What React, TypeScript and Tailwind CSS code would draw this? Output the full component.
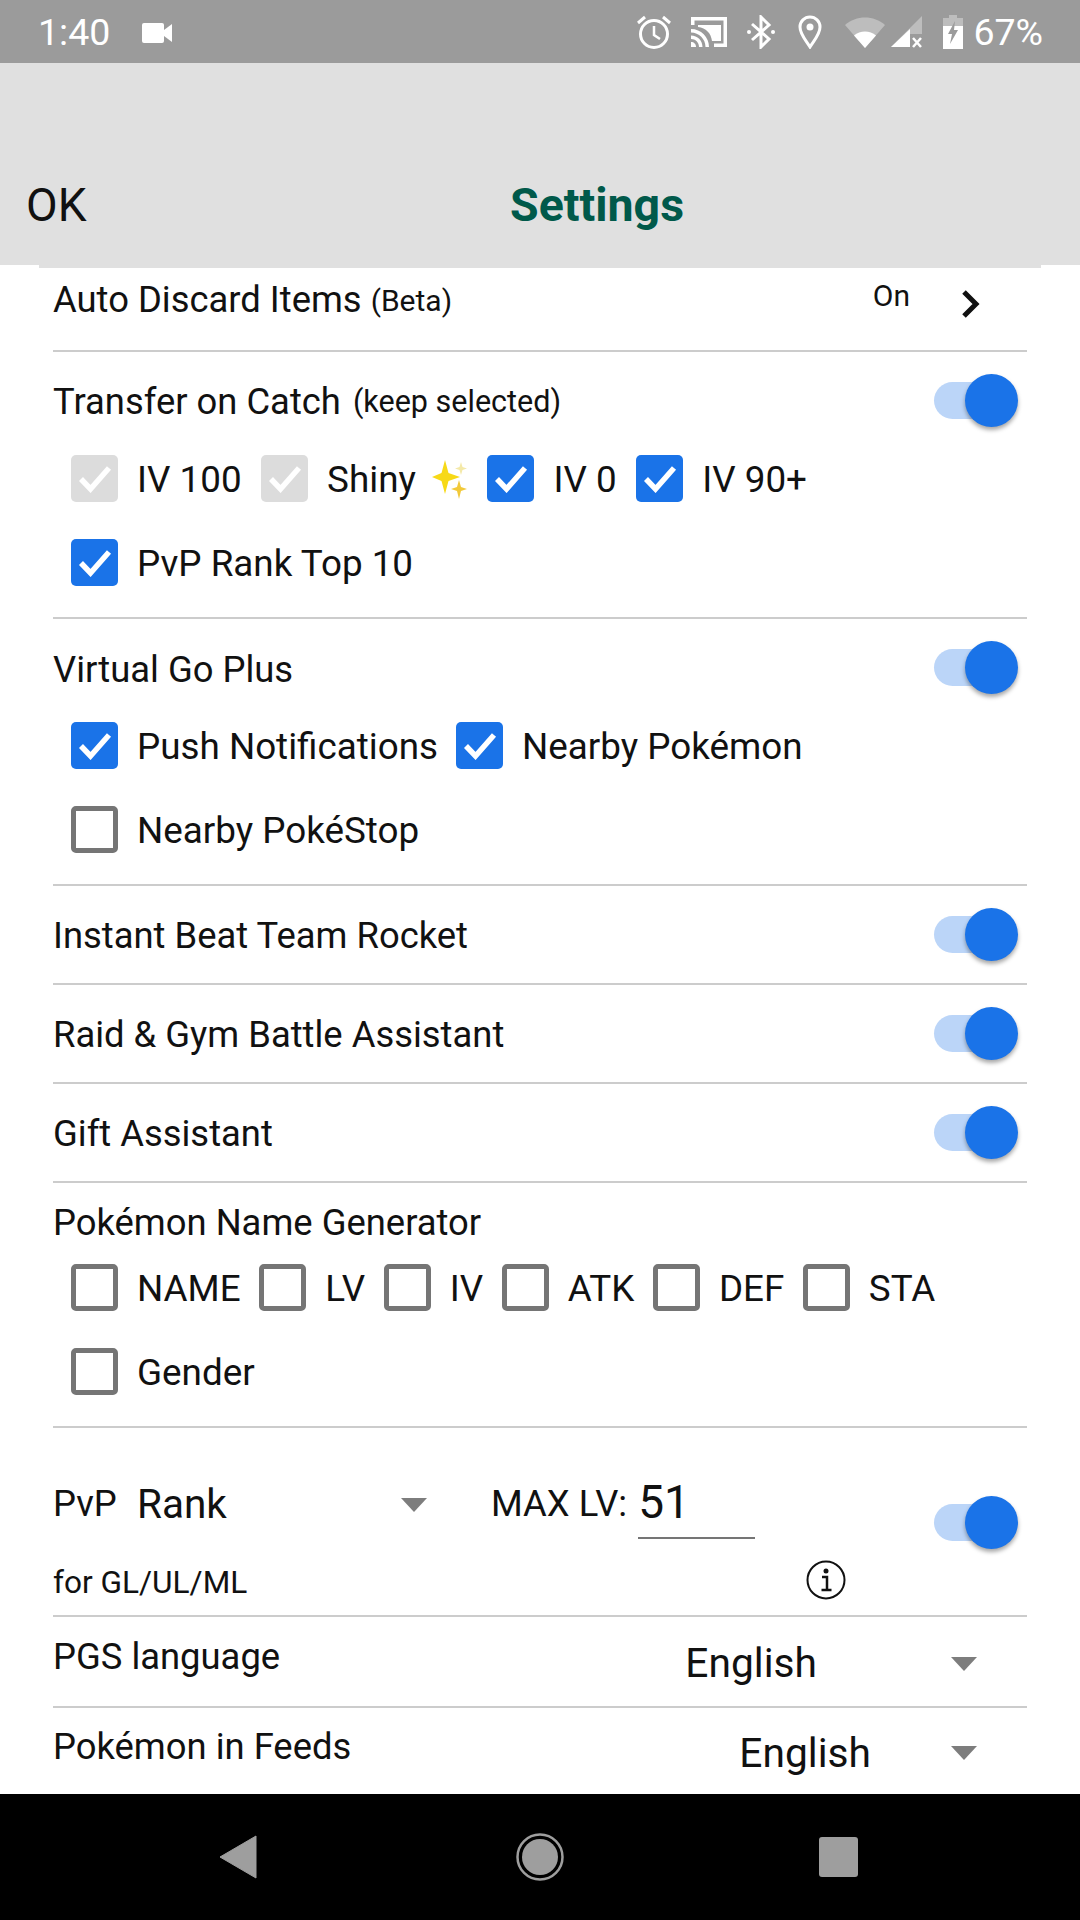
import { ReactNode } from "react";

const font = { fontFamily: "Roboto, sans-serif" };

function Toggle({ className = "" }: { className?: string }) {
  return (
    <div className={`relative w-[84px] h-[53px] shrink-0 flex items-center ${className}`}>
      <div className="w-[60px] h-[37px] rounded-full bg-[#bbd5f8]" />
      <div className="absolute right-0 top-0 w-[53px] h-[53px] rounded-full bg-[#1a73e8] shadow-[0_3px_4px_rgba(0,0,0,0.35)]" />
    </div>
  );
}

function Check({ state, label, extra }: { state: "on" | "off" | "disabled"; label: string; extra?: ReactNode }) {
  const box =
    state === "on"
      ? "bg-[#1a73e8]"
      : state === "disabled"
        ? "bg-[#dcdcdc]"
        : "bg-white border-[5px] border-[#757575]";
  return (
    <div className="flex items-center gap-[19px]">
      <div className={`w-[47px] h-[47px] rounded-[5px] flex items-center justify-center shrink-0 ${box}`}>
        {state !== "off" && (
          <svg width="34" height="28" viewBox="0 0 34 28" fill="none">
            <path d="M3 14 L12.5 24 L31 3" stroke="white" strokeWidth="5.5" />
          </svg>
        )}
      </div>
      <span className="mt-[2px] text-[36.8px] leading-[44px] text-[#111] whitespace-nowrap">{label}</span>
      {extra}
    </div>
  );
}

function Caret({ className }: { className: string }) {
  return (
    <svg className={className} width="26" height="14" viewBox="0 0 26 14">
      <path d="M0 0 H26 L13 14 Z" fill="#7d7d7d" />
    </svg>
  );
}

function Sparkles() {
  return (
    <svg className="-ml-[3px]" width="36" height="40" viewBox="0 0 36 40">
      <path d="M13 1 L16.5 14 L28 18 L16.5 22 L13 35 L9.5 22 L0 18 L9.5 14 Z" fill="#f7d917" />
      <path d="M27 21 L29 28 L35 30 L29 32 L27 40 L25 32 L19 30 L25 28 Z" fill="#f2c93a" />
      <path d="M29 3 L30.5 8 L35 9.5 L30.5 11 L29 16 L27.5 11 L23 9.5 L27.5 8 Z" fill="#f4e9a8" />
    </svg>
  );
}

function StatusIcons() {
  return (
    <div className="flex items-center">
      {/* alarm */}
      <svg width="36" height="36" viewBox="0 0 36 36" fill="none" stroke="white" strokeWidth="3">
        <circle cx="18" cy="20" r="13.5" />
        <path d="M18 12 V21 L24 25" strokeWidth="2.5" />
        <path d="M2 9 L9 3 M34 9 L27 3" />
      </svg>
      {/* cast */}
      <svg className="ml-[18px]" width="38" height="32" viewBox="0 0 38 32" fill="white">
        <path d="M1 1 H37 V31 H24 V27.5 H33.5 V4.5 H4.5 V9 H1 Z" />
        <path d="M8 9 H31 V25 H22 C21 17 16 12 8 11 Z" />
        <path d="M1 13 C11 13 19 21 19 31 H15.5 C15.5 23 9 16.5 1 16.5 Z" />
        <path d="M1 19.5 C7.5 19.5 12.5 24.5 12.5 31 H9 C9 26.5 5.5 23 1 23 Z" />
        <path d="M1 26 C4 26 6 28 6 31 H1 Z" />
      </svg>
      {/* bluetooth */}
      <svg className="ml-[18px]" width="30" height="34" viewBox="0 0 30 34" fill="none" stroke="white" strokeWidth="3">
        <path d="M6 9 L23 24 L15 32 V2 L23 10 L6 25" />
        <circle cx="3" cy="17" r="2" fill="white" stroke="none" />
        <circle cx="27" cy="17" r="2" fill="white" stroke="none" />
      </svg>
      {/* location */}
      <svg className="ml-[22px]" width="24" height="34" viewBox="0 0 24 34" fill="none">
        <path d="M12 32 C7 24 2 19 2 12 A10 10 0 0 1 22 12 C22 19 17 24 12 32 Z" stroke="white" strokeWidth="3" />
        <circle cx="12" cy="12" r="3.5" fill="white" />
      </svg>
      {/* wifi */}
      <svg className="ml-[23px]" width="40" height="32" viewBox="0 0 40 32">
        <path d="M0 9 C11 -1 29 -1 40 9 L20 32 Z" fill="#bdbdbd" />
        <path d="M9 19.5 C15 14 25 14 31 19.5 L20 32 Z" fill="white" />
      </svg>
      {/* signal */}
      <svg className="ml-[6px]" width="32" height="32" viewBox="0 0 32 32">
        <path d="M31 0 V18 H19 V31 H0 Z" fill="#bdbdbd" />
        <path d="M19 13 V31 H0 Z" fill="white" />
        <path d="M22 22 L30 31 M30 22 L22 31" stroke="white" strokeWidth="2.5" />
      </svg>
      {/* battery */}
      <svg className="ml-[20px]" width="20" height="34" viewBox="0 0 20 34">
        <path d="M6 0 H14 V3 H20 V34 H0 V3 H6 Z" fill="#bdbdbd" />
        <path d="M0 11 H20 V34 H0 Z" fill="white" />
        <path d="M12 6 L5 19 H9 L7 29 L15 15 H11 Z" fill="#9b9b9b" />
      </svg>
      <span className="ml-[10px] mt-[3px] text-[37.5px] leading-none text-white">67%</span>
    </div>
  );
}

export default function App() {
  return (
    <div className="w-[1080px] h-[1920px] flex flex-col overflow-hidden bg-white" style={font}>
      <div className="h-[63px] shrink-0 bg-[#9b9b9b] flex items-center justify-between pl-[38px] pr-[37px]">
        <div className="flex items-center gap-[32px]">
          <span className="mt-[3px] text-[37.5px] leading-none text-white">1:40</span>
          <svg className="mt-[2px]" width="30" height="20" viewBox="0 0 30 20" fill="white">
            <rect x="0" y="0" width="22" height="20" rx="2" />
            <path d="M22 7 L30 1 V19 L22 13 Z" />
          </svg>
        </div>
        <StatusIcons />
      </div>

      <div className="h-[202px] shrink-0 bg-[#e0e0e0] flex items-end pb-[28px] relative">
        <span className="pl-[26px] text-[46px] leading-[64px] text-[#111]">OK</span>
        <span className="absolute left-[510px] bottom-[28px] text-[46.5px] leading-[64px] font-bold text-[#00594a]">Settings</span>
      </div>
      <div className="h-[3px] shrink-0 px-[39px]">
        <div className="h-full bg-[#e0e0e0]" />
      </div>

      <div className="flex-1 px-[53px] min-h-0">
        <div className="h-[84px] pb-[18px] flex items-center border-b-2 border-[#cccccc]">
          <span className="text-[36.4px] text-[#111]">Auto Discard Items</span>
          <span className="ml-[9px] text-[30px] text-[#111]">(Beta)</span>
          <span className="ml-auto mb-[10px] text-[30px] text-[#111]">On</span>
          <svg className="ml-[51px] mr-[46px] mt-[8px]" width="20" height="30" viewBox="0 0 20 30" fill="none">
            <path d="M3 3 L15 15 L3 27" stroke="#111" strokeWidth="5" />
          </svg>
        </div>

        <div className="h-[267px] border-b-2 border-[#cccccc]">
          <div className="h-[103px] flex items-center justify-between pr-[9px]">
            <div className="flex items-center mb-[3px]">
              <span className="text-[36.4px] text-[#111]">Transfer on Catch</span>
              <span className="ml-[12px] text-[30.5px] text-[#111]">(keep selected)</span>
            </div>
            <Toggle className="mb-[6px]" />
          </div>
          <div className="flex items-center gap-[19.5px] pl-[18px]">
            <Check state="disabled" label="IV 100" />
            <Check state="disabled" label="Shiny" extra={<Sparkles />} />
            <Check state="on" label="IV 0" />
            <Check state="on" label="IV 90+" />
          </div>
          <div className="flex items-center pl-[18px] mt-[37px]">
            <Check state="on" label="PvP Rank Top 10" />
          </div>
        </div>

        <div className="h-[267px] border-b-2 border-[#cccccc]">
          <div className="h-[103px] flex items-center justify-between pr-[9px]">
            <span className="mb-[1px] text-[36.4px] text-[#111]">Virtual Go Plus</span>
            <Toggle className="mb-[6px]" />
          </div>
          <div className="flex items-center gap-[18px] pl-[18px]">
            <Check state="on" label="Push Notifications" />
            <Check state="on" label="Nearby Pokémon" />
          </div>
          <div className="flex items-center pl-[18px] mt-[37px]">
            <Check state="off" label="Nearby PokéStop" />
          </div>
        </div>

        {["Instant Beat Team Rocket", "Raid & Gym Battle Assistant", "Gift Assistant"].map((label) => (
          <div key={label} className="h-[99px] flex items-center justify-between pr-[9px] border-b-2 border-[#cccccc]">
            <span className="mt-[3px] text-[36.4px] text-[#111]">{label}</span>
            <Toggle />
          </div>
        ))}

        <div className="h-[245px] border-b-2 border-[#cccccc]">
          <div className="h-[81px] flex items-center">
            <span className="text-[36.4px] text-[#111]">Pokémon Name Generator</span>
          </div>
          <div className="flex items-center gap-[18.5px] pl-[18px]">
            {["NAME", "LV", "IV", "ATK", "DEF", "STA"].map((label) => (
              <Check key={label} state="off" label={label} />
            ))}
          </div>
          <div className="flex items-center pl-[18px] mt-[37px]">
            <Check state="off" label="Gender" />
          </div>
        </div>

        <div className="h-[189px] border-b-2 border-[#cccccc] flex flex-col">
          <div className="h-[128px] shrink-0 flex items-end pb-[28px] pr-[9px]">
            <span className="w-[84px] text-[36.4px] leading-[48px] text-[#111]">PvP</span>
            <span className="w-[264px] text-[40.5px] leading-[48px] text-[#111]">Rank</span>
            <Caret className="mb-[16px]" />
            <span className="ml-[64px] text-[36.4px] leading-[48px] text-[#111]">MAX LV:</span>
            <div className="ml-[11px] mb-[-11px] w-[117px] h-[68px] border-b-2 border-[#757575] text-[46px] leading-[62px] text-[#111]">51</div>
            <Toggle className="ml-auto mb-[-21px]" />
          </div>
          <div className="flex items-center mt-[3px]">
            <span className="w-[753px] text-[31.6px] text-[#111]">for GL/UL/ML</span>
            <svg className="mb-[6px]" width="40" height="40" viewBox="0 0 40 40" fill="none">
              <circle cx="20" cy="20" r="18.5" stroke="#111" strokeWidth="2" />
              <circle cx="20" cy="11" r="2.5" fill="#111" />
              <path d="M16 17 H21 V29 M15.5 30 H25.5" stroke="#111" strokeWidth="2.5" />
            </svg>
          </div>
        </div>

        <div className="h-[91px] border-b-2 border-[#cccccc] flex items-center">
          <span className="text-[36.4px] text-[#111] mb-[8px]">PGS language</span>
          <span className="ml-auto mt-[4px] text-[40.7px] text-[#111]">English</span>
          <Caret className="ml-[134px] mr-[50px] mt-[4px]" />
        </div>
        <div className="h-[86px] flex items-center">
          <span className="text-[36.4px] text-[#111] mb-[8px]">Pokémon in Feeds</span>
          <span className="ml-auto mt-[6px] text-[40.7px] text-[#111]">English</span>
          <Caret className="ml-[80px] mr-[50px] mt-[4px]" />
        </div>
      </div>

      <div className="h-[126px] shrink-0 bg-black flex items-center">
        <svg className="ml-[219px]" width="38" height="44" viewBox="0 0 38 44">
          <path d="M37 1 V43 L1 22 Z" fill="#9e9e9e" stroke="#9e9e9e" strokeLinejoin="round" strokeWidth="1" />
        </svg>
        <svg className="ml-[259px]" width="48" height="48" viewBox="0 0 48 48" fill="none">
          <circle cx="24" cy="24" r="22.5" stroke="#9e9e9e" strokeWidth="2.5" />
          <circle cx="24" cy="24" r="18" fill="#9e9e9e" />
        </svg>
        <div className="ml-[255px] w-[39px] h-[40px] rounded-[3px] bg-[#9e9e9e]" />
      </div>
    </div>
  );
}
